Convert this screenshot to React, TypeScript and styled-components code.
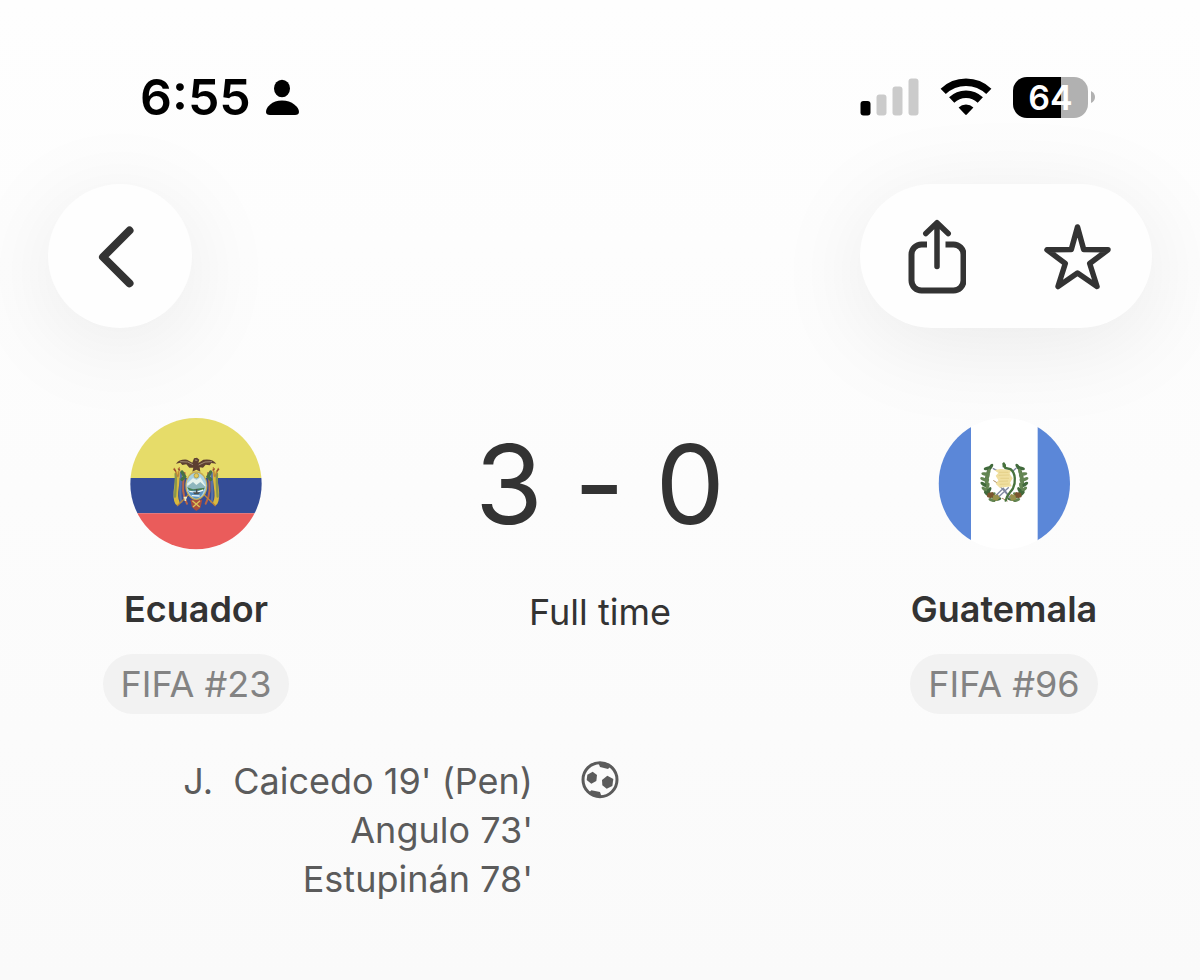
import React from "react";
import styled, { createGlobalStyle } from "styled-components";

const GlobalStyle = createGlobalStyle`
  *, *::before, *::after { box-sizing: border-box; }
  html { min-height: 100%; background: linear-gradient(#fefefe, #fafafa); }
  body { margin: 0; font-family: Inter, "Liberation Sans", sans-serif; color: #333; }
`;

const Screen = styled.div`
  display: flex;
  flex-direction: column;
  padding-bottom: 48px;
`;

const StatusBar = styled.div`
  display: flex;
  align-items: center;
  justify-content: space-between;
  height: 50px;
  margin-top: 72px;
  padding: 0 105px 0 140px;
  color: #000;
`;

const StatusGroup = styled.div<{ $gap: number }>`
  display: flex;
  align-items: center;
  gap: ${(p) => p.$gap}px;
`;

const Clock = styled.time`
  font-size: 50px;
  line-height: 50px;
  font-weight: 600;
`;

const Battery = styled.div`
  display: flex;
  align-items: center;
  gap: 3px;
`;

const BatteryCell = styled.div`
  width: 75px;
  height: 41px;
  border-radius: 14px;
  background: linear-gradient(90deg, #000 64%, #b1b1b1 64%);
  color: #fff;
  font-size: 34px;
  line-height: 41px;
  font-weight: 600;
  text-align: center;
`;

const Nav = styled.nav`
  display: flex;
  justify-content: space-between;
  margin-top: 62px;
  padding: 0 48px;
`;

const Capsule = styled.div<{ $inset: number }>`
  display: flex;
  height: 144px;
  padding: 0 ${(p) => p.$inset}px;
  border-radius: 72px;
  background: #fefefe;
  box-shadow: 0 16px 96px rgba(0, 0, 0, 0.08);
`;

const IconButton = styled.button<{ $width: number }>`
  display: flex;
  align-items: center;
  justify-content: center;
  width: ${(p) => p.$width}px;
  height: 144px;
  padding: 0;
  border: 0;
  border-radius: 72px;
  background: transparent;
  color: #333;
  cursor: pointer;
`;

const Match = styled.section`
  display: grid;
  grid-template-columns: 296px 1fr 296px;
  margin-top: 90px;
  padding: 0 48px;
`;

const Column = styled.div`
  display: flex;
  flex-direction: column;
  align-items: center;
`;

const TeamName = styled.h2`
  margin: 35px 0 21px;
  font-size: 36px;
  line-height: 48px;
  font-weight: 600;
`;

const Rank = styled.span`
  padding: 0 18px;
  border-radius: 30px;
  background: #f2f2f2;
  color: #838383;
  font-size: 36px;
  line-height: 60px;
  white-space: nowrap;
`;

/* Contextual alternates would raise the dash to the middle of the digits. */
const Score = styled.h1`
  margin: 0;
  font-size: 110px;
  line-height: 132px;
  font-weight: 400;
  font-feature-settings: "calt" 0;
  white-space: nowrap;
`;

const Phase = styled.p`
  margin: 38px 0 0;
  font-size: 36px;
  line-height: 48px;
`;

const Goals = styled.section`
  display: grid;
  grid-template-columns: 1fr 38px 1fr;
  column-gap: 48px;
  margin-top: 43px;
  padding: 0 48px;
  color: #5b5b5b;
`;

const Scorers = styled.ul`
  margin: 0;
  padding: 0;
  list-style: none;
  font-size: 36px;
  line-height: 49px;
  text-align: right;
  white-space: pre-wrap;
`;

const BallSlot = styled.div`
  display: flex;
  align-items: center;
  height: 46px;
`;

const Person = () => (
  <svg width="34" height="38" viewBox="0 0 34 38" fill="currentColor" aria-hidden="true">
    <ellipse cx="16" cy="10.500" rx="8" ry="8.700" />
    <path d="M4 37C1.500 37 0 36 0 34C0 29 6 22.500 16 22.500S33 29 33 34C33 36 31.500 37 29 37Z" />
  </svg>
);

const Signal = () => (
  <svg width="59" height="38" viewBox="0 0 59 38" role="img" aria-label="Signal">
    <rect x="0.500" y="23" width="10" height="14.500" rx="3" fill="#000" />
    <g fill="#cbcbcb">
      <rect x="16.500" y="16.500" width="10" height="21" rx="3" />
      <rect x="32.500" y="8.500" width="10" height="29" rx="3" />
      <rect x="48.500" y="0.500" width="10" height="37" rx="3" />
    </g>
  </svg>
);

const Wifi = () => (
  <svg width="52" height="38" viewBox="0 0 52 38" role="img" aria-label="Wi-Fi">
    <g fill="none" stroke="#000" strokeWidth="7.500">
      <path d="M3.200 13.400A33 33 0 0 1 48.800 13.400" />
      <path d="M11.700 22A20.500 20.500 0 0 1 40.300 22" />
    </g>
    <path d="M18.600 29.400A10.800 10.800 0 0 1 33.400 29.400L26.800 36.600Q26 37.400 25.200 36.600Z" fill="#000" />
  </svg>
);

const BackIcon = () => (
  <svg width="44" height="64" viewBox="0 0 44 64" fill="none" stroke="currentColor" strokeWidth="8" strokeLinecap="round" strokeLinejoin="round" aria-hidden="true">
    <path d="M31.500 6.500L5 33L31.500 59.300" />
  </svg>
);

const ShareIcon = () => (
  <svg width="60" height="76" viewBox="0 0 60 76" fill="none" stroke="currentColor" aria-hidden="true">
    <path strokeWidth="6" d="M21 26.500H15.500A10 10 0 0 0 5.500 36.500V62.500A10 10 0 0 0 15.500 72.500H47.500A10 10 0 0 0 57.500 62.500V36.500A10 10 0 0 0 47.500 26.500H39.500" />
    <path strokeWidth="5.500" strokeLinecap="round" strokeLinejoin="round" d="M31 5V48.500M19.800 15.500L31 4.700L42.200 15.500" />
  </svg>
);

const StarIcon = () => (
  <svg width="70" height="72" viewBox="0 0 70 72" fill="none" stroke="currentColor" strokeWidth="5.500" strokeLinejoin="round" aria-hidden="true">
    <path d="M36.500 7L42.700 29.500L67 29.800L48.700 43.500L56 66.500L36.500 53L17 66.500L24.300 43.500L6 29.800L30.300 29.500Z" />
  </svg>
);

const BallIcon = () => (
  <svg width="38" height="38" viewBox="0 0 114 114" role="img" aria-label="Goals">
    <circle cx="57" cy="56" r="51" fill="none" stroke="currentColor" strokeWidth="9" />
    <g fill="currentColor">
      <path d="M19 41L35 32L48 42L46 60L31 68L17 57Z" />
      <path d="M63 57L79 44L97 54L94 75L77 83L64 73Z" />
      <path d="M52 5L57 18L81 24L92 13Z" />
      <path d="M22 97L31 88L57 93L62 108Z" />
    </g>
  </svg>
);

const EcuadorFlag = () => (
  <svg width="132" height="132" viewBox="60 53 396 396" role="img" aria-label="Flag of Ecuador">
    <defs>
      <clipPath id="ecuador-disc"><circle cx="258" cy="250" r="197" /></clipPath>
    </defs>
    <g clipPath="url(#ecuador-disc)">
      <path fill="#e6dc69" d="M60 52H456V233H60Z" />
      <path fill="#344d97" d="M60 233H456V339H60Z" />
      <path fill="#ea5c5b" d="M60 339H456V448H60Z" />
    </g>
    {/* flags draped on both sides of the shield */}
    <g fill="none" strokeLinecap="round">
      <g id="ecuador-drape">
        <path stroke="#d9b93e" strokeWidth="14" d="M202 220C205 256 189 282 202 307" />
        <path stroke="#5871a5" strokeWidth="7" d="M213 218C213 260 207 284 214 305" />
        <path stroke="#b96546" strokeWidth="6" d="M224 218C216 255 216 285 231 310" />
        <path stroke="#88974d" strokeWidth="7" d="M197 221C199 251 196 272 195 289" />
        <path stroke="#bd843b" strokeWidth="4" d="M193 204L203 229M208 202L205 227M202 316L234 285" />
        <path stroke="#477144" strokeWidth="10" d="M216 215L224 229L216 237" />
        <path stroke="#9c4b32" strokeWidth="4" d="M192 207L197 212M205 206L209 209" />
      </g>
      <use href="#ecuador-drape" transform="translate(518 0) scale(-1 1)" />
    </g>
    <path fill="#a94e3e" d="M241 298L277 298L271 323L259 332L246 321Z" />
    <path stroke="#dac35a" strokeWidth="4" d="M247 301L269 320M270 301L249 320" />
    {/* oval shield: sky, mountain, river and steamer */}
    <ellipse cx="259" cy="256" rx="33" ry="43" fill="#c7aa51" />
    <ellipse cx="259" cy="256" rx="30" ry="39" fill="#a8cfdf" />
    <path fill="#e7f2ed" d="M231 250L249 233L260 239L271 231L287 257L280 264L235 263Z" />
    <path fill="#8fb6bd" d="M233 257L249 245L259 254L271 245L286 259L281 268H235Z" />
    <path fill="#477d4f" d="M231 261L249 267L284 262L280 271L241 275Z" />
    <path fill="#5b93c2" d="M234 271L282 269Q274 295 258 295Q243 291 234 271Z" />
    <path fill="none" stroke="#eef8fa" strokeWidth="4" d="M238 273L260 276L280 269M245 286L269 287" />
    <path fill="#4b5051" d="M249 276H271L265 282H253ZM258 266H262V277H258Z" />
    <circle cx="259" cy="226" r="7" fill="#e6ca58" stroke="#9d8c40" strokeWidth="2" />
    {/* condor */}
    <path fill="#5d4031" d="M198 190Q208 176 231 178L247 187L252 174L261 172L268 178L265 188L280 178Q308 174 319 190L304 188L299 195L287 193L279 202L269 201L271 214L259 208L247 214L250 202L238 202L229 192L217 194L211 187Z" />
    <path fill="none" stroke="#a28b75" strokeWidth="3" d="M211 184L233 185L249 193M306 184L285 185L266 194M255 179L262 180" />
    <path fill="none" stroke="#eee9bd" strokeWidth="5" d="M221 292H231M226 292V302" />
  </svg>
);

const leaves: [number, number, number][] = [
  [214, 200, 35], [204, 204, 75], [208, 215, 15], [197, 221, 100], [205, 229, 20],
  [193, 237, 115], [203, 243, 20], [193, 252, 125], [205, 257, 15], [196, 267, 130],
  [209, 270, 30], [203, 280, 130], [219, 283, 60], [218, 299, 110], [235, 296, 80],
];

const GuatemalaFlag = () => (
  <svg width="132" height="132" viewBox="56 53 396 396" role="img" aria-label="Flag of Guatemala">
    <defs>
      <clipPath id="guatemala-disc"><circle cx="255" cy="250" r="197" /></clipPath>
    </defs>
    <g clipPath="url(#guatemala-disc)">
      <path fill="#fff" d="M57 52H453V448H57Z" />
      <path fill="#5b87d8" d="M57 52H155V448H57ZM355 52H453V448H355Z" />
    </g>
    {/* laurel wreath */}
    <g id="guatemala-laurel">
      <path d="M213 200C192 233 194 277 232 299" fill="none" stroke="#50703f" strokeWidth="7" />
      {leaves.map(([x, y, angle]) => (
        <ellipse key={`${x}-${y}`} cx={x} cy={y} rx="5" ry="11" fill={y % 2 ? "#638552" : "#416a3c"} transform={`rotate(${angle} ${x} ${y})`} />
      ))}
      <path fill="#7a552f" d="M205 278L220 275L227 286L214 294L203 290Z" />
      <path fill="#97914b" d="M222 285L235 281L242 292L232 302L219 297Z" />
    </g>
    <use href="#guatemala-laurel" transform="translate(510 0) scale(-1 1)" />
    {/* crossed rifles and swords */}
    <g fill="none" strokeLinecap="round">
      <path stroke="#7f87a0" strokeWidth="4" d="M222 205L239 214M290 204L281 212M232 283L252 264L268 286M243 259L272 292M267 262L240 288" />
      <path stroke="#b08d61" strokeWidth="3" d="M223 241L239 251M264 302L249 294" />
    </g>
    {/* scroll */}
    <path fill="#f0dfa0" d="M225 209L244 206L276 209L271 220L280 234L272 247L277 258L241 262L229 250L237 240L229 226L237 218Z" />
    <path fill="none" stroke="#dfc97f" strokeWidth="2" d="M239 216H267M238 225L270 224M243 234H269M239 243L266 242M241 252L268 251" />
    {/* quetzal */}
    <path fill="none" stroke="#47723d" strokeWidth="7" strokeLinecap="round" d="M254 192L258 203L273 206C290 218 289 248 281 264C274 276 262 283 259 301" />
    <path fill="#47723d" d="M249 189L254 185L260 193L260 204L250 201Z" />
  </svg>
);

function Team({ flag, name, rank }: { flag: React.ReactNode; name: string; rank: number }) {
  return (
    <Column>
      {flag}
      <TeamName>{name}</TeamName>
      <Rank>FIFA #{rank}</Rank>
    </Column>
  );
}

const goals = ["J.  Caicedo 19' (Pen)", "Angulo 73'", "Estupinán 78'"];

export default function App() {
  return (
    <>
      <GlobalStyle />
      <Screen>
        <StatusBar>
          <StatusGroup $gap={15}>
            <Clock>6:55</Clock>
            <Person />
          </StatusGroup>
          <StatusGroup $gap={21}>
            <Signal />
            <Wifi />
            <Battery>
              <BatteryCell>64</BatteryCell>
              <svg width="4" height="12" viewBox="0 0 4 12" aria-hidden="true">
                <path d="M0 0Q4 2 4 6T0 12Z" fill="#b1b1b1" />
              </svg>
            </Battery>
          </StatusGroup>
        </StatusBar>
        <Nav>
          <Capsule $inset={0}>
            <IconButton $width={144} aria-label="Back"><BackIcon /></IconButton>
          </Capsule>
          <Capsule $inset={6}>
            <IconButton $width={140} aria-label="Share"><ShareIcon /></IconButton>
            <IconButton $width={140} aria-label="Favourite"><StarIcon /></IconButton>
          </Capsule>
        </Nav>
        <main>
          <Match>
            <Team flag={<EcuadorFlag />} name="Ecuador" rank={23} />
            <Column>
              <Score>3 - 0</Score>
              <Phase>Full time</Phase>
            </Column>
            <Team flag={<GuatemalaFlag />} name="Guatemala" rank={96} />
          </Match>
          <Goals>
            <Scorers>
              {goals.map((goal) => <li key={goal}>{goal}</li>)}
            </Scorers>
            <BallSlot><BallIcon /></BallSlot>
          </Goals>
        </main>
      </Screen>
    </>
  );
}
